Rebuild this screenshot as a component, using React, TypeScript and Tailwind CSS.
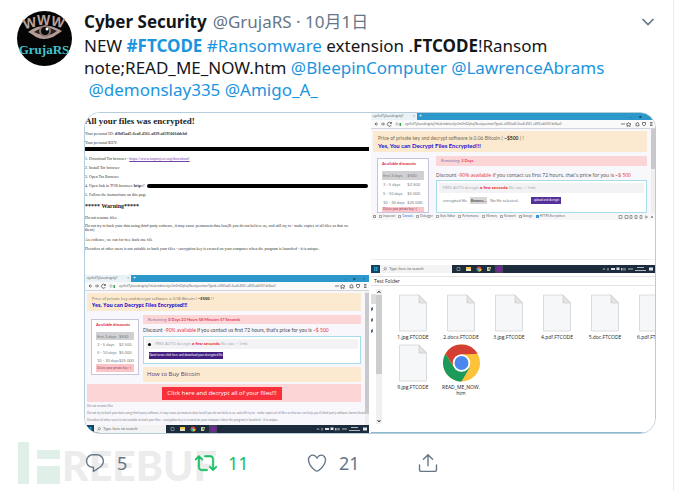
import React from 'react';
import clsx from 'clsx';

const files = ['1.jpg.FTCODE', '2.docx.FTCODE', '3.jpg.FTCODE', '4.pdf.FTCODE', '5.doc.FTCODE', '6.pdf.FTCODE', '9.jpg.FTCODE'];

const Avatar = () => (
  <svg viewBox="0 0 55 55" className="size-[55px] shrink-0" role="img" aria-label="Cyber Security">
    <circle cx="27.500" cy="27.500" r="27.500" fill="#050505" />
    <g fill="#b9a19b" fontFamily="Liberation Sans, sans-serif" fontWeight="bold" fontSize="14">
      <text x="6" y="17" transform="rotate(-14 12 12)">W</text>
      <text x="20" y="14">W</text>
      <text x="34" y="16" transform="rotate(14 42 12)">W</text>
    </g>
    <path d="M11 21q16-12 34-1-6 4-9 6-10 4-17 0-4-3-8-5Z" fill="#b39c96" />
    <path d="M17 21q11-8 23-1-10 8-23 1Z" fill="#2a2220" />
    <circle cx="28" cy="20" r="6" fill="#8a7773" />
    <circle cx="28" cy="20" r="4" fill="#0b0b0b" />
    <circle cx="30" cy="18" r="1.500" fill="#fff" />
    <text x="27" y="43" textAnchor="middle" fill="#42c3cf" fontFamily="Liberation Serif, serif" fontWeight="bold" fontSize="13">GrujaRS</text>
  </svg>
);

const ReplyIcon = () => (
  <svg viewBox="0 0 24 24" className="size-[22px]" fill="currentColor">
    <path d="M14.046 2.242l-4.148-.010h-.002c-4.374 0-7.800 3.427-7.800 7.802 0 4.098 3.186 7.206 7.465 7.370v3.828c0 .108.044.286.120.403.142.225.384.347.632.347.138 0 .277-.038.402-.118.264-.168 6.473-4.140 8.088-5.506 1.902-1.610 3.040-3.970 3.043-6.312v-.017c-.006-4.367-3.430-7.787-7.800-7.788zm3.787 12.972c-1.134.960-4.862 3.405-6.772 4.643V16.670c0-.414-.335-.750-.750-.750h-.396c-3.660 0-6.318-2.476-6.318-5.886 0-3.534 2.768-6.302 6.300-6.302l4.147.010h.002c3.532 0 6.300 2.766 6.302 6.296-.003 1.910-.942 3.844-2.514 5.176z" />
  </svg>
);

const RetweetIcon = () => (
  <svg viewBox="0 0 24 24" className="size-[22px]" fill="currentColor">
    <path stroke="currentColor" strokeWidth=".7" d="M23.770 15.670c-.292-.293-.767-.293-1.060 0l-2.220 2.220V7.650c0-2.068-1.683-3.750-3.750-3.750h-5.850c-.414 0-.750.336-.750.750s.336.750.750.750h5.850c1.240 0 2.250 1.010 2.250 2.250v10.240l-2.220-2.220c-.293-.293-.768-.293-1.060 0s-.294.768 0 1.060l3.500 3.500c.145.147.337.220.530.220s.383-.072.530-.220l3.500-3.500c.294-.292.294-.767 0-1.060zm-10.660 3.280H7.260c-1.240 0-2.250-1.010-2.250-2.250V6.460l2.220 2.220c.148.147.340.220.532.220s.384-.073.530-.220c.293-.293.293-.768 0-1.060l-3.500-3.500c-.293-.294-.768-.294-1.060 0l-3.500 3.500c-.294.292-.294.767 0 1.060s.767.293 1.060 0l2.220-2.220V16.700c0 2.068 1.683 3.750 3.750 3.750h5.850c.414 0 .750-.336.750-.750s-.337-.750-.750-.750z" />
  </svg>
);

const HeartIcon = () => (
  <svg viewBox="0 0 24 24" className="size-[22px]" fill="currentColor">
    <path d="M12 21.638h-.014C9.403 21.590 1.950 14.856 1.950 8.478c0-3.064 2.525-5.754 5.403-5.754 2.290 0 3.830 1.580 4.646 2.730.814-1.148 2.354-2.730 4.645-2.730 2.880 0 5.404 2.690 5.404 5.755 0 6.376-7.454 13.110-10.037 13.157H12zM7.354 4.225c-2.080 0-3.903 1.988-3.903 4.255 0 5.740 7.034 11.596 8.550 11.658 1.518-.062 8.550-5.917 8.550-11.658 0-2.267-1.823-4.255-3.903-4.255-2.528 0-3.940 2.936-3.952 2.965-.230.562-1.156.562-1.387 0-.014-.030-1.425-2.965-3.954-2.965z" />
  </svg>
);

const ShareIcon = () => (
  <svg viewBox="0 0 24 24" className="size-[22px]" fill="currentColor">
    <path d="M17.530 7.470l-5-5c-.293-.293-.768-.293-1.060 0l-5 5c-.294.293-.294.768 0 1.060s.767.294 1.060 0l3.720-3.720V15c0 .414.336.750.750.750s.750-.336.750-.750V4.810l3.720 3.720c.146.147.338.220.530.220s.384-.072.530-.220c.293-.293.293-.767 0-1.060z" />
    <path d="M19.708 21.944H4.292C3.028 21.944 2 20.916 2 19.652V14c0-.414.336-.750.750-.750s.750.336.750.750v5.652c0 .437.355.792.792.792h15.416c.437 0 .792-.355.792-.792V14c0-.414.336-.750.750-.750s.750.336.750.750v5.652c0 1.264-1.028 2.292-2.292 2.292z" />
  </svg>
);

const ChromeLogo = () => (
  <svg viewBox="0 0 40 40" className="h-[38px] w-[39px]">
    <circle cx="20" cy="20" r="19.500" fill="#fbc23a" />
    <path d="M3.100 10.300A19.500 19.500 0 0 1 36.900 10.300L20 11L12 24Z" fill="#d43f33" />
    <path d="M3.100 10.300A19.500 19.500 0 0 0 20 39.500L28.500 25L20 29L12 24.500Z" fill="#1b9a59" />
    <circle cx="20" cy="20" r="9.200" fill="#fff" />
    <circle cx="20" cy="20" r="7.300" fill="#4a88ee" />
  </svg>
);

const FileIcon = () => (
  <svg viewBox="0 0 28 37" className="h-[38px] w-[28px]">
    <path d="M.5.5H20L27.500 8.500V36.500H.5Z" fill="#f6f7f8" stroke="#dcdcdc" />
    <path d="M20 .5V8.500H27.500Z" fill="#e2e3e5" stroke="#cbcbcb" strokeWidth=".7" />
  </svg>
);

const Taskbar = () => (
  <div className="flex h-[8px] shrink-0 items-center bg-[#1c2c3c] font-['Open_Sans',sans-serif] text-[4px] leading-[8px] text-white">
    <svg viewBox="0 0 9 8" className="h-[8px] w-[9px]">
      <path d="M0 0H9V8H0Z" fill="#15445f" />
      <path d="M3 2h1.500v1.700H3zM5 2h1.500v1.700H5zM3 4.200h1.500v1.700H3zM5 4.200h1.500v1.700H5z" fill="#35a6dc" />
    </svg>
    <div className="flex h-full w-[72px] items-center gap-[2px] bg-[#f3f3f3] pl-[3px] text-[#666]">
      <svg viewBox="0 0 4 4" className="size-[4px]"><path d="M.5 3.500 1.500 2.500" stroke="#555" strokeWidth=".5" /><circle cx="2.300" cy="1.700" r="1.200" fill="none" stroke="#555" strokeWidth=".5" /></svg>
      <span className="font-['Lato',sans-serif]">Type here to search</span>
    </div>
    <svg viewBox="0 0 52 8" className="h-[8px] w-[52px]">
      <path d="M5 2.500h3v3H5z" fill="none" stroke="#aab4bd" strokeWidth=".6" />
      <path d="M14 2h5v4h-5z" fill="#f1c94f" /><path d="M14 4h5v2h-5z" fill="#e7e1c1" />
      <circle cx="27" cy="4" r="2.500" fill="#d94b3a" /><path d="M24.500 4a2.500 2.500 0 0 0 2.500 2.500V4Z" fill="#29a35a" /><path d="M29.500 4A2.500 2.500 0 0 1 27 6.500V4Z" fill="#f4c63c" /><circle cx="27" cy="4" r="1" fill="#6da1ef" />
      <path d="m35 2 4 0-1 4h-3z" fill="#c8d2a1" /><path d="m36 4 2-2v3z" fill="#378a50" />
      <path d="M43 0h8v8h-8z" fill="#49405e" /><circle cx="47" cy="4" r="2.500" fill="#7d22a8" />
    </svg>
    <svg viewBox="0 0 62 8" className="ml-auto h-[8px] w-[62px]">
      <path d="M10 4.700 11 3.500l1 1.200M15 3v2.500M28.500 3v2.500M30 3v2.500M32 3v2.500" stroke="#fff" fill="none" strokeWidth=".7" />
      <path d="M18 3h4v2h-4zM23.500 2.500h3V5h-3z" fill="#dbe2e7" />
      <path d="M35 4h5M44 2.500h7M42 5.500h11" stroke="#aeb9c1" strokeWidth="1.200" />
      <path d="M56 2.500h4v3h-4z" fill="#dfe5e8" />
    </svg>
  </div>
);

const BrowserBar = () => (
  <>
    <div className="flex h-[7px] shrink-0 items-center bg-[#2b97cb]">
      <span className="flex h-full w-[46px] items-center justify-between overflow-hidden bg-[#e9f2f7] px-[2px] text-[3px] leading-[7px] text-[#555]">
        <span>ayv5of7yluaodeqpity?</span><span>×</span>
      </span>
      <span className="pl-[2px] text-[5px] leading-[7px] text-white">+</span>
      <span className="ml-auto flex gap-[7px] pr-[4px] text-[4px] leading-[7px] text-[#154d70]"><span>–</span><span>■</span><span>×</span></span>
    </div>
    <div className="flex h-[9px] shrink-0 items-center gap-[4px] border-b border-[#d5d5d9] bg-[#fafafa] px-[2px] text-[#555]">
      <svg viewBox="0 0 28 8" className="h-[8px] w-[28px]" fill="none" stroke="currentColor" strokeWidth=".8">
        <path d="M3.500 2.500 2 4l1.500 1.500M2 4h3M8 4h3M10 2.500 11.500 4 10 5.500M18 3a2 2 0 1 0 .3 2M18.500 2v1.500H17" />
        <circle cx="24" cy="4" r="1.200" stroke="#aaa" /><path d="M26.500 3h1.500v3h-1.500z" fill="#36a344" stroke="none" />
      </svg>
      <input readOnly aria-label="Address" value="ayv5of7yluaodeqpity7nkakvnbnteslyc2m3n32phq7beatyuoman/?guid=a5f65a45-6ea8-4561-a839-ab5501dc8aa0" className="h-[8px] min-w-0 flex-1 text-[3px] leading-[8px] outline-none" />
      <svg viewBox="0 0 34 8" className="h-[8px] w-[34px]" fill="none" stroke="currentColor" strokeWidth=".8">
        <path d="M2 4h4M9.500 2.500l1 1.200 1.500.2-1.200 1 .3 1.600-1.600-.8-1.500.8.3-1.600-1-1 1.600-.2zM17 5.800V3.500l2-1 1 2v1.300zM23.500 2.500h3v2.200l-1.500 1.300-1.500-1.300zM31 2.500h2.500M31 4h2.500M31 5.500h2.500" />
      </svg>
    </div>
  </>
);

const PriceBanner = ({ tall }: { tall?: boolean }) => (
  <div className={clsx('flex shrink-0 flex-col justify-center bg-[#fbead0] px-[5px] whitespace-nowrap', tall ? "h-[21px] font-['Lato',sans-serif] leading-[8px]" : 'h-[18px] leading-[7px]')}>
    <p className={clsx('text-[#77694f]', tall ? 'text-[5px]' : 'text-[4px]')}>
      Price of private key and decrypt software is 0.06 Bitcoin ( <b className="text-[#3c3428]">~$500</b> ) !
    </p>
    <p className={clsx('font-bold text-[#2211cc]', tall ? 'text-[6px]' : 'text-[5px]')}>Yes, You can Decrypt Files Encrypted!!!</p>
  </div>
);

const rates = [
  ['first 3 days', '$500'],
  ['3 - 5 days', '$2 500'],
  ['5 - 10 days', '$5 000'],
  ['10 - 30 days', '$25 000'],
];

const Discounts = ({ tall }: { tall?: boolean }) => (
  <div className={clsx("shrink-0 overflow-hidden border border-[#c8c4dc] bg-white px-[4px] font-['Lato',sans-serif]", tall ? 'w-[52px]' : 'h-[56px] w-[48px]')}>
    <p className="h-[12px] pt-[1px] text-[4px] leading-[8px] font-bold whitespace-nowrap text-[#e02038]">Available discounts</p>
    <table className="w-full text-left text-[4px] leading-[7px] text-[#777]">
      <tbody>
        {rates.map(([days, price], i) => (
          <tr key={days} className={clsx(tall ? 'h-[9px]' : 'h-[8px]', i === 0 ? 'bg-[#d0d0d2]' : 'bg-white')}>
            <td className="p-0 pl-[1px] whitespace-nowrap">{days}</td>
            <td className="p-0 whitespace-nowrap">{price}</td>
          </tr>
        ))}
      </tbody>
    </table>
    <p className={clsx('bg-[#fbc4c8] pl-[1px] text-[3px] whitespace-nowrap text-[#8d3558]', tall ? 'h-[5px] leading-[5px]' : 'h-[8px] leading-[8px]')}>Delete your private key :-(</p>
  </div>
);

const DiscountLine = ({ tall }: { tall?: boolean }) => (
  <p className={clsx('text-[5px] leading-[8px] whitespace-nowrap text-[#4a4a50]', !tall && "font-['Lato',sans-serif]")}>
    Discount <span className="text-[#e83040]">-90% available</span> if you contact us first 72 hours, that's price for you is <span className="text-[#e83040]">~$ 500</span>
  </p>
);

const AutoDecrypt = () => (
  <p className="h-[10px] shrink-0 bg-[#f3f3f5] pl-[4px] text-[4px] leading-[10px] whitespace-nowrap text-[#a0a0a5]">
    FREE AUTO decrypt <b className="text-[#e83040]">a few seconds</b> file size &lt; 1mb
  </p>
);

const RansomNote = () => (
  <div className="h-[162px] overflow-hidden bg-white pt-[2px] font-['Liberation_Serif',serif] text-[4px] whitespace-nowrap text-[#333]">
    <h2 className="text-[9px] leading-[12px] font-bold text-[#222]">All your files was encrypted!</h2>
    <p className="mt-[2px] leading-[9px]">Your personal ID: <b>d3b85ad5-6ea8-4561-a839-a0595001ddeb0</b></p>
    <p className="leading-[9px]">Your personal KEY:</p>
    <div className="h-[4px] bg-black" />
    <p className="mt-[3px] leading-[9px]">1. Download Tor browser - <a href="#tor" className="text-[#7740a8] underline">https://www.torproject.org/download/</a></p>
    <p className="leading-[9px]">2. Install Tor browser</p>
    <p className="leading-[9px]">3. Open Tor Browser</p>
    <p className="flex items-center leading-[9px]">
      <span>4. Open link in TOR browser: <b>http://</b></span>
      <span className="mr-[1px] ml-[2px] h-[4px] flex-1 rounded-full bg-black" />
    </p>
    <p className="leading-[9px]">5. Follow the instructions on this page</p>
    <h3 className="mt-[2px] text-[6px] leading-[10px] font-bold text-[#222]">***** Warning*****</h3>
    <p className="mt-[2px] leading-[9px]">Do not rename files</p>
    <p className="mt-[2px] leading-[4px]">
      Do not try to back your data using third-party software, it may cause permanent data loss(If you do not believe us, and still try to - make copies of all files so that we
      <br />
      them)
    </p>
    <p className="mt-[3px] leading-[9px]">As evidence, we can for free back one file</p>
    <p className="leading-[9px]">Decoders of other users is not suitable to back your files - encryption key is created on your computer when the program is launched - it is unique.</p>
  </div>
);

const DecryptedBrowser = () => (
  <div className="flex min-h-0 flex-1 flex-col font-['Open_Sans',sans-serif]">
    <BrowserBar />
    <div className="flex min-h-0 flex-1 bg-[#f8f7fc]">
      <div className="flex min-w-0 flex-1 flex-col pt-[2px] pr-[4px] pl-[2px]">
        <PriceBanner />
        <div className="mt-[4px] flex h-[67px] shrink-0 gap-[4px] pl-[4px]">
          <div className="pt-[4px]"><Discounts /></div>
          <div className="flex min-w-0 flex-1 flex-col">
            <p className="h-[9px] shrink-0 bg-[#fcd5d7] pl-[5px] font-['Lato',sans-serif] text-[4px] leading-[9px] whitespace-nowrap text-[#8a78a8]">Remaining: <b className="text-[#e04060]">0 Days 23 Hours 58 Minutes 57 Seconds</b></p>
            <div className="mt-[2px]"><DiscountLine /></div>
            <div className="mt-[2px] h-[28px] shrink-0 border border-[#a9dcea] bg-white p-[2px]">
              <div className="flex items-center bg-[#f3f3f5] pl-[2px]"><span className="size-[3px] rounded-full bg-black" /><AutoDecrypt /></div>
              <button className="mt-[3px] ml-[3px] block h-[7px] w-[74px] bg-[#432080] font-['Lato',sans-serif] text-[3px] leading-[7px] whitespace-nowrap text-white">Good news: click here and download your decrypted file</button>
            </div>
            <p className="mt-[3px] h-[15px] shrink-0 bg-[#fbead0] pl-[4px] text-[6px] leading-[15px] whitespace-nowrap text-[#5a3c78]">How to Buy Bitcoin</p>
          </div>
        </div>
        <div className="mt-[2px] flex h-[18px] shrink-0 items-center justify-center bg-[#fcd5d7] pr-[4px]">
          <button className="h-[13px] w-[120px] bg-[#f8303c] text-[6px] leading-[13px] whitespace-nowrap text-white">Click here and decrypt all of your files!!!</button>
        </div>
        <div className="mt-[1px] font-['Lato',sans-serif] text-[3px] leading-[7px] whitespace-nowrap text-[#85858b]">
          <p>Do not rename files</p>
          <p>Do not try to back your data using third-party software, it may cause permanent data loss(If you do not believe us, and still try to - make copies of all files so that we can help you if third-party software harms them)</p>
          <p>Decoders of other users is not suitable to back your files - encryption key is created on your computer when the program is launched - it is unique.</p>
        </div>
      </div>
      <div className="w-[4px] bg-[#eee] pt-[2px]"><div className="h-[121px] bg-[#c9c9cb]" /></div>
    </div>
    <Taskbar />
  </div>
);

const devTabs = ['Inspector', 'Console', 'Debugger', 'Style Editor', 'Performance', 'Memory', 'Network', 'Storage', 'HTTPS Everywhere'];

const UploadBrowser = () => (
  <div className="flex h-[160px] flex-col overflow-hidden bg-white font-['Open_Sans',sans-serif]">
    <BrowserBar />
    <div className="flex h-[84px] shrink-0 bg-[#f8f7fc]">
      <div className="flex min-w-0 flex-1 flex-col pt-[2px] pr-[4px] pl-[2px]">
        <PriceBanner tall />
        <div className="mt-[4px] flex gap-[7px] pl-[4px]">
          <div className="pt-[2px]"><Discounts tall /></div>
          <div className="flex min-w-0 flex-1 flex-col">
            <p className="h-[10px] bg-[#fcd5d7] pl-[5px] font-['Lato',sans-serif] text-[4px] leading-[10px] text-[#8a78a8]">Remaining: <b className="text-[#e04060]">3 Days</b></p>
            <div className="mt-[5px]"><DiscountLine tall /></div>
            <div className="mt-[1px] h-[33px] border border-[#a9dcea] bg-white p-[2px]">
              <AutoDecrypt />
              <div className="mt-[4px] flex items-center gap-[3px] pl-[4px] font-['Lato',sans-serif] text-[4px] leading-[7px] whitespace-nowrap text-[#777]">
                <span>encrypted file</span>
                <button className="h-[7px] w-[17px] bg-[#d7d7d7] leading-[7px] text-[#222]">Browse...</button>
                <span>No file selected.</span>
                <button className="ml-[10px] h-[7px] w-[30px] bg-[#54309a] text-[3px] leading-[7px] text-white">upload and decrypt</button>
              </div>
            </div>
          </div>
        </div>
      </div>
      <div className="w-[4px] bg-[#eee]"><div className="h-[40px] bg-[#c9c9cb]" /></div>
    </div>
    <div className="flex h-[7px] shrink-0 items-center gap-[3px] bg-[#f7f7f9] pl-[2px] font-['Lato',sans-serif] text-[3px] leading-[7px] whitespace-nowrap text-[#666]">
      <span className="size-[3px] border border-[#999]" />
      {devTabs.map((tab) => (
        <span key={tab} className={clsx('flex items-center gap-[1px]', tab === 'Console' && 'text-[#1676d2]')}>
          <span className={clsx('size-[3px]', tab === 'HTTPS Everywhere' ? 'bg-[#3595dd]' : 'border border-[#aaa]')} />
          {tab}
        </span>
      ))}
      <svg viewBox="0 0 36 6" className="mr-[1px] ml-auto h-[6px] w-[36px]" fill="none" stroke="#777" strokeWidth=".7">
        <path d="M1 1.500h3v3H1zM7 1.500h3v3H7zM12 1.500h2v3h-2zM17 1.500h2v3h-2zM22 1.500h2v3h-2zM27 3h3M28 1.500v3M33 2l2 2M35 2l-2 2" />
      </svg>
    </div>
    <div className="mt-auto border-t border-[#eee] pt-[5px]"><Taskbar /></div>
  </div>
);

const FileItem = ({ name }: { name: string }) => (
  <div className="flex w-[48px] shrink-0 flex-col items-center text-[5px] leading-[6px] whitespace-nowrap">
    <FileIcon />
    <span className="mt-[2px]">{name}</span>
  </div>
);

const Explorer = () => (
  <div className="flex h-[160px] flex-col overflow-hidden border-b border-[#8db9cc] bg-white font-['Open_Sans',sans-serif] text-[#222]">
    <p className="mt-[3px] h-[10px] shrink-0 border-y border-[#e4e4e6] pl-[3px] text-[5px] leading-[8px]">Test Folder</p>
    <div className="flex min-h-0 flex-1 pt-[3px]">
      <div className="w-[5px] text-[4px] leading-[11px] text-[#547088]">
        <div className="mt-[5px] h-[10px] bg-[#ddd]" />
        {[0, 1, 2].map((pin) => (
          <svg key={pin} viewBox="0 0 5 11" className="h-[11px] w-[5px]"><path d="m0 4 2-1v3l-2 1z" fill="currentColor" /></svg>
        ))}
      </div>
      <div className="flex h-[135px] w-[6px] shrink-0 flex-col items-center justify-between bg-[#f0f0f0]">
        <svg viewBox="0 0 6 6" className="size-[6px]"><path d="m1.500 4 1.500-2 1.500 2" fill="none" stroke="#444" /></svg>
        <div className="mb-auto h-[79px] w-full bg-[#cdcdcd]" />
        <svg viewBox="0 0 6 6" className="size-[6px]"><path d="m1.500 2 1.500 2 1.500-2" fill="none" stroke="#444" /></svg>
      </div>
      <div className="min-w-0 flex-1 overflow-hidden pt-[5px] pl-[7px]">
        <div className="flex">
          {files.slice(0, 6).map((file) => <FileItem key={file} name={file} />)}
        </div>
        <div className="mt-[4px] flex">
          <FileItem name={files[6]} />
          <div className="flex w-[48px] shrink-0 flex-col items-center text-center text-[5px] leading-[6px]">
            <ChromeLogo />
            <span className="mt-[2px]">READ_ME_NOW.<br />htm</span>
          </div>
        </div>
      </div>
    </div>
  </div>
);

const Watermark = () => (
  <div className="pointer-events-none absolute top-[8px] left-[18px] flex h-[42px] items-end" aria-hidden="true">
    <div className="mr-[8px] h-full w-[11px] bg-[#e0efe8]" />
    <div className="mr-[2px] flex h-[34px] w-[23px] flex-col gap-[7px]">
      <div className="h-[9px] bg-[#e0efe8]" />
      <div className="flex-1 bg-[#e0efe8]" />
    </div>
    <span className="font-['Lato',sans-serif] text-[41px] leading-[36px] font-black text-[#ececec]">REEBUF</span>
  </div>
);

const actions = [
  { label: 'Reply', count: '5', icon: <ReplyIcon />, color: 'text-[#657786]' },
  { label: 'Retweet', count: '11', icon: <RetweetIcon />, color: 'text-[#17bf63]' },
  { label: 'Like', count: '21', icon: <HeartIcon />, color: 'text-[#657786]' },
  { label: 'Share', count: '', icon: <ShareIcon />, color: 'text-[#657786]' },
];

const Mention = ({ children, bold }: { children: string; bold?: boolean }) => (
  <a href="#tweet" className={clsx('text-[#1b95e0]', bold && 'font-bold')}>{children}</a>
);

const App: React.FC = () => {
  return (
    <article className="relative border-r border-[#e6ecf0] bg-white pt-[11px] font-['Noto_Sans','Noto_Sans_CJK_SC',sans-serif] text-[17px] leading-[22px] text-[#14171a]">
      <div className="flex gap-3 pr-[17px] pl-[17px]">
        <Avatar />
        <div className="min-w-0 flex-1">
          <header className="flex items-center whitespace-nowrap">
            <b>Cyber Security</b>
            <span className="ml-[6px] text-[#657786]">@GrujaRS · 10月1日</span>
            <button aria-label="More" className="ml-auto text-[#657786]">
              <svg viewBox="0 0 16 16" className="size-[16px]" fill="none" stroke="currentColor" strokeWidth="1.700"><path d="m2.500 5 5.500 5.500L13.500 5" /></svg>
            </button>
          </header>
          <p className="mt-[2px] whitespace-nowrap">
            NEW <Mention bold>#FTCODE</Mention> <Mention>#Ransomware</Mention> extension .<b>FTCODE</b>!Ransom
            <br />
            note;READ_ME_NOW.htm <Mention>@BleepinComputer</Mention> <Mention>@LawrenceAbrams</Mention>
            <br />
            &nbsp;<Mention>@demonslay335</Mention> <Mention>@Amigo_A_</Mention>
          </p>
          <div className="mt-[11px] grid grid-cols-2 gap-[2px] overflow-hidden rounded-2xl border border-[#b5cddb]">
            <div className="flex min-w-0 flex-col">
              <RansomNote />
              <DecryptedBrowser />
            </div>
            <div className="min-w-0">
              <UploadBrowser />
              <Explorer />
            </div>
          </div>
        </div>
      </div>
      <footer className="relative h-[57px] pt-[18px] pl-[84px]">
        <Watermark />
        <div className="relative flex text-[18px]">
          {actions.map((action) => (
            <button key={action.label} aria-label={action.label} className={clsx('flex w-[111px] items-center gap-[11px]', action.color)}>
              {action.icon}
              {action.count && <span>{action.count}</span>}
            </button>
          ))}
        </div>
      </footer>
    </article>
  );
};

export default App;
